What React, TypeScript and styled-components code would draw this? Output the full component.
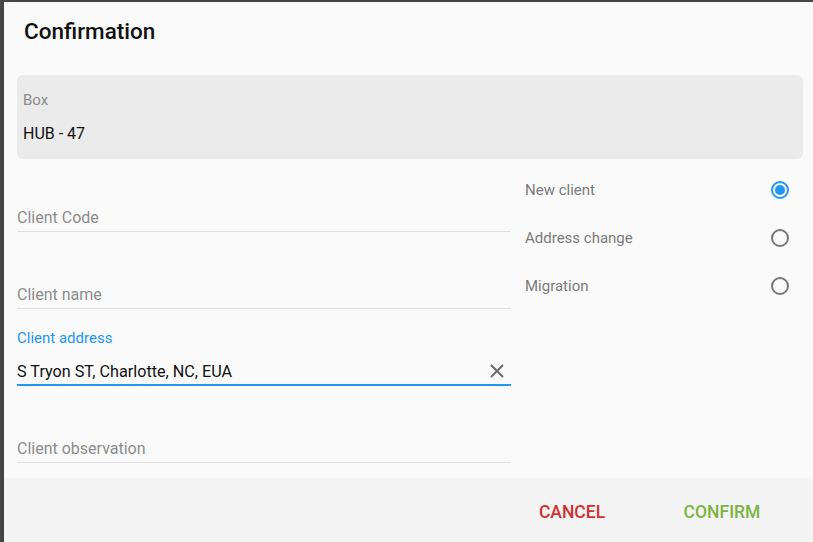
import React from "react";
import styled, { createGlobalStyle } from "styled-components";

const GlobalStyle = createGlobalStyle`
    html, body {
        margin: 0;
        padding: 0;
        width: 813px;
        height: 542px;
        overflow: hidden;
        background: #4e4e4c;
        font-family: Roboto, "Noto Sans", Arial, sans-serif;
    }
`;

interface IField {
    label: string,
    value?: string,
    focused?: boolean,
    first?: boolean,
}

interface IRadioRow {
    label: string,
    checked?: boolean,
}

const TextField = ({ label, value, focused, first }: IField) => {
    return (
        <Field $first={first}>
            {value && <FloatLabel $focused={focused}>{label}</FloatLabel>}
            <InputRow $focused={focused}>
                {value ? <Value>{value}</Value> : <Placeholder>{label}</Placeholder>}
                {value &&
                    <ClearButton>
                        <svg width="14" height="14" viewBox="0 0 14 14">
                            <path d="M1 1 L13 13 M13 1 L1 13" stroke="#6b6b6b" strokeWidth="2" fill="none"/>
                        </svg>
                    </ClearButton>
                }
            </InputRow>
        </Field>
    );
};

const RadioRow = ({ label, checked }: IRadioRow) => {
    return (
        <Option>
            <OptionLabel>{label}</OptionLabel>
            <Radio $checked={checked}>{checked && <Dot/>}</Radio>
        </Option>
    );
};

const App = () => {
    return (
        <>
            <GlobalStyle/>
            <Dialog>
                <Title>Confirmation</Title>
                <BoxCard>
                    <BoxLabel>Box</BoxLabel>
                    <BoxValue>HUB - 47</BoxValue>
                </BoxCard>
                <FormGrid>
                    <LeftColumn>
                        <TextField label="Client Code" first/>
                        <TextField label="Client name"/>
                        <TextField label="Client address" value="S Tryon ST, Charlotte, NC, EUA" focused/>
                        <TextField label="Client observation"/>
                    </LeftColumn>
                    <RightColumn>
                        <RadioRow label="New client" checked/>
                        <RadioRow label="Address change"/>
                        <RadioRow label="Migration"/>
                    </RightColumn>
                </FormGrid>
                <Footer>
                    <ActionButton $color="#d32f2f">Cancel</ActionButton>
                    <ActionButton $color="#7cb342">Confirm</ActionButton>
                </Footer>
            </Dialog>
        </>
    );
};

const Dialog = styled.div`
    margin: 2px 0 0 4px;
    width: 812px;
    height: 560px;
    background-color: #fafafa;
    display: flex;
    flex-direction: column;
    box-shadow: 0 0 12px rgba(0, 0, 0, 0.3);
`

const Title = styled.h2`
    margin: 0;
    padding: 16px 20px 0;
    font-size: 22.5px;
    line-height: 26px;
    font-weight: 500;
    color: #111;
`

const BoxCard = styled.div`
    margin: 31px 13px 0;
    height: 84px;
    box-sizing: border-box;
    padding: 16px 6px;
    background-color: #ebebeb;
    border-radius: 6px;
    display: flex;
    flex-direction: column;
    gap: 15px;
    flex-shrink: 0;
`

const BoxLabel = styled.div`
    font-size: 15px;
    line-height: 18px;
    color: #8a8a8a;
`

const BoxValue = styled.div`
    font-size: 16px;
    line-height: 20px;
    color: #111;
`

const FormGrid = styled.div`
    display: grid;
    grid-template-columns: 494px 1fr;
    column-gap: 14px;
    padding: 0 27px 0 13px;
    height: 321px;
    flex-shrink: 0;
`

const LeftColumn = styled.div`
    display: flex;
    flex-direction: column;
`

const Field = styled.div<{ $first?: boolean }>`
    height: ${p => p.$first ? 73 : 77}px;
    display: flex;
    flex-direction: column;
    justify-content: flex-end;
`

const FloatLabel = styled.div<{ $focused?: boolean }>`
    font-size: 15px;
    line-height: 18px;
    color: ${p => p.$focused ? "#2196f3" : "#8a8a8a"};
    margin-bottom: 9px;
`

const InputRow = styled.div<{ $focused?: boolean }>`
    height: 30px;
    display: flex;
    align-items: center;
    justify-content: space-between;
    box-sizing: border-box;
    border-bottom: ${p => p.$focused ? "2px solid #2196f3" : "1px solid #e0e0e0"};
    padding-top: 2px;
    padding-bottom: ${p => p.$focused ? 0 : 1}px;
`

const Placeholder = styled.span`
    font-size: 16px;
    color: #8c8c8c;
`

const Value = styled.span`
    font-size: 16.2px;
    color: #111;
`

const ClearButton = styled.span`
    display: flex;
    align-items: center;
    margin-right: 7px;
`

const RightColumn = styled.div`
    display: flex;
    flex-direction: column;
    padding-top: 7px;
`

const Option = styled.div`
    height: 48px;
    display: flex;
    align-items: center;
    justify-content: space-between;
`

const OptionLabel = styled.span`
    font-size: 15px;
    color: #7a7a7a;
`

const Radio = styled.span<{ $checked?: boolean }>`
    width: 18px;
    height: 18px;
    box-sizing: border-box;
    border-radius: 50%;
    border: 2px solid ${p => p.$checked ? "#2196f3" : "#777"};
    display: flex;
    align-items: center;
    justify-content: center;
`

const Dot = styled.span`
    width: 10px;
    height: 10px;
    border-radius: 50%;
    background-color: #2196f3;
`

const Footer = styled.div`
    height: 64px;
    flex-shrink: 0;
    background-color: #f4f4f4;
    box-shadow: 0 -1px 3px rgba(0, 0, 0, 0.04);
    display: flex;
    align-items: center;
    justify-content: flex-end;
    gap: 30px;
    padding-right: 34px;
`

const ActionButton = styled.button<{ $color: string }>`
    width: 120px;
    height: 36px;
    border: none;
    background: transparent;
    font-family: Roboto, "Noto Sans", Arial, sans-serif;
    font-size: 17.5px;
    font-weight: 500;
    text-transform: uppercase;
    color: ${p => p.$color};
    cursor: pointer;
`

export default App;
